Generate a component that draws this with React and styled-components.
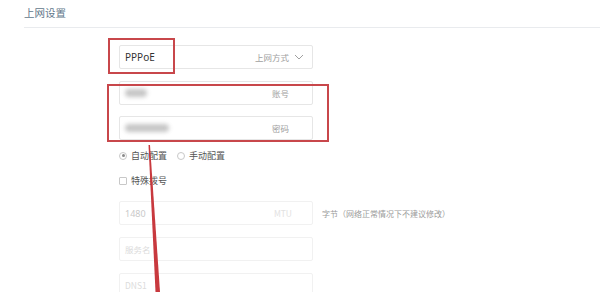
import React from 'react';
import styled, { createGlobalStyle } from 'styled-components';

const GlobalStyle = createGlobalStyle`
  body {
    margin: 0;
    background: #fff;
    font-family: "Noto Sans CJK SC", "Noto Sans", sans-serif;
  }
`;

const Page = styled.div`
  position: relative;
  width: 600px;
  height: 292px;
  overflow: hidden;
  padding-left: 24px;
  box-sizing: border-box;
`;

const Header = styled.div`
  height: 27px;
  line-height: 26px;
  font-size: 10.5px;
  color: #62788b;
  border-bottom: 1px solid #e9ebee;
`;

const Form = styled.div`
  display: flex;
  flex-direction: column;
  padding: 17px 0 0 95px;
`;

const Row = styled.div`
  display: flex;
  align-items: center;
  margin-top: ${(p) => p.$gap || 0}px;
`;

const Field = styled.div`
  width: 194px;
  height: 24px;
  box-sizing: border-box;
  border: 1px solid ${(p) => (p.$faint ? '#f1f1f1' : '#e6e6e6')};
  border-radius: 2px;
  display: flex;
  align-items: center;
  justify-content: space-between;
  padding: 0 8px 0 5px;
  font-size: 9px;
`;

const Value = styled.span`
  font-family: "Noto Sans", "Noto Sans CJK SC", sans-serif;
  font-size: ${(p) => (p.$faint ? 9 : 10)}px;
  color: ${(p) => (p.$faint ? '#c9c9c9' : '#333')};
`;

const Placeholder = styled.span`
  font-size: 8.5px;
  color: #dcdcdc;
`;

const Blur = styled.span`
  display: inline-block;
  width: ${(p) => p.$w}px;
  height: 8px;
  border-radius: 4px;
  background: #c6c6c6;
  filter: blur(2px);
`;

const Suffix = styled.span`
  display: flex;
  align-items: center;
  gap: 5px;
  font-size: 8.5px;
  color: ${(p) => (p.$faint ? '#e2e2e2' : '#a0a0a0')};
  padding-right: ${(p) => p.$pad || 0}px;
`;

const Option = styled.label`
  display: flex;
  align-items: center;
  gap: 4px;
  font-size: 9px;
  color: #555;
  margin-right: 10px;
`;

const Radio = styled.span`
  width: 6px;
  height: 6px;
  border: 1px solid #c8c8c8;
  border-radius: 50%;
  display: flex;
  align-items: center;
  justify-content: center;
  &::after {
    content: '';
    width: 3px;
    height: 3px;
    border-radius: 50%;
    background: ${(p) => (p.$on ? '#8a8a8a' : 'transparent')};
  }
`;

const Check = styled.span`
  width: 6px;
  height: 6px;
  border: 1px solid #c8c8c8;
  border-radius: 1px;
`;

const Note = styled.span`
  margin-left: 9px;
  font-size: 8px;
  color: #9a9a9a;
`;

const RedBox = styled.div`
  position: absolute;
  left: ${(p) => p.$x}px;
  top: ${(p) => p.$y}px;
  width: ${(p) => p.$w}px;
  height: ${(p) => p.$h}px;
  box-sizing: border-box;
  border: 2px solid #c8474b;
`;

const Arrow = styled.svg`
  position: absolute;
  left: 0;
  top: 0;
  pointer-events: none;
`;

const Chevron = () => (
  <svg width="10" height="6" viewBox="0 0 10 6">
    <path d="M1 1 L5 5 L9 1" fill="none" stroke="#a0a0a0" strokeWidth="1" />
  </svg>
);

export default function App() {
  return (
    <Page>
      <GlobalStyle />
      <Header>上网设置</Header>
      <Form>
        <Row>
          <Field>
            <Value>PPPoE</Value>
            <Suffix>
              上网方式 <Chevron />
            </Suffix>
          </Field>
        </Row>
        <Row $gap={12}>
          <Field>
            <Blur $w={22} />
            <Suffix $pad={15}>账号</Suffix>
          </Field>
        </Row>
        <Row $gap={11}>
          <Field>
            <Blur $w={44} />
            <Suffix $pad={15}>密码</Suffix>
          </Field>
        </Row>
        <Row $gap={9}>
          <Option>
            <Radio $on /> 自动配置
          </Option>
          <Option>
            <Radio /> 手动配置
          </Option>
        </Row>
        <Row $gap={12}>
          <Option>
            <Check /> 特殊拨号
          </Option>
        </Row>
        <Row $gap={14}>
          <Field $faint>
            <Value $faint>1480</Value>
            <Suffix $faint $pad={12}>MTU</Suffix>
          </Field>
          <Note>字节（网络正常情况下不建议修改）</Note>
        </Row>
        <Row $gap={12}>
          <Field $faint>
            <Placeholder>服务名</Placeholder>
          </Field>
        </Row>
        <Row $gap={12}>
          <Field $faint>
            <Placeholder>DNS1</Placeholder>
          </Field>
        </Row>
      </Form>
      <RedBox $x={108} $y={38} $w={67} $h={36} />
      <RedBox $x={107} $y={84} $w={222} $h={58} />
      <Arrow width="600" height="292">
        <polygon points="148.5,145 150,145 160,292 155.5,292" fill="#c8393e" />
      </Arrow>
    </Page>
  );
}
